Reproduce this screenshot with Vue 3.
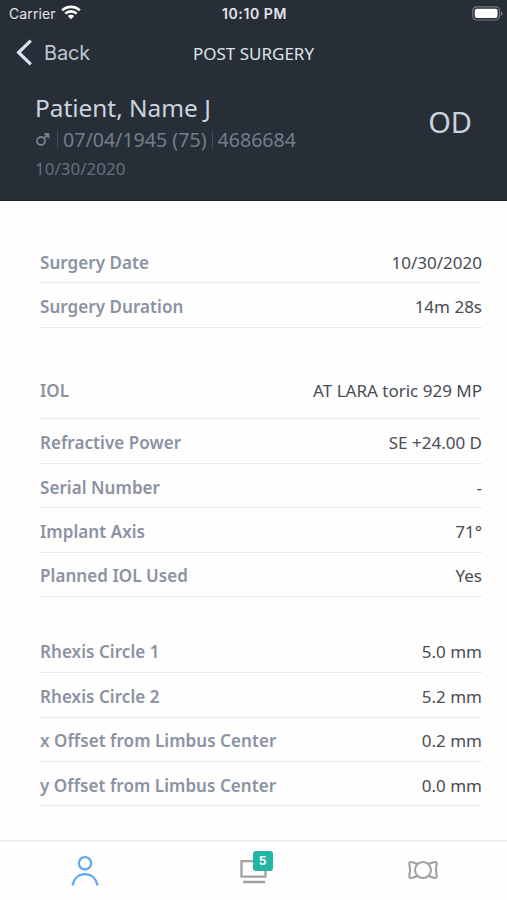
<template>
  <div class="screen">
    <header class="header">
      <div class="status-bar">
        <div class="carrier">
          <span>Carrier</span>
          <svg class="wifi" width="20" height="15" viewBox="0 0 20 15">
            <path d="M1.2 5.4a12.6 12.6 0 0 1 17.6 0" />
            <path d="M4.3 8.6a8.2 8.2 0 0 1 11.4 0" />
            <path class="wifi-dot" d="M6.8 11a4.6 4.6 0 0 1 6.4 0L10 14.3z" />
          </svg>
        </div>
        <span class="time">10:10 PM</span>
        <svg class="battery" width="31" height="15" viewBox="0 0 31 15">
          <rect class="battery-shell" x="0.8" y="0.8" width="26.8" height="13.2" rx="4" />
          <rect class="battery-level" x="2.8" y="2.8" width="22.8" height="9.2" rx="2" />
          <path class="battery-cap" d="M29 5.2c2 .8 2 3.8 0 4.6z" />
        </svg>
      </div>

      <nav class="nav-bar">
        <button type="button" class="back">
          <svg width="17" height="27" viewBox="0 0 17 27">
            <path d="M14.8 1.6L2.6 13.5l12.2 11.9" />
          </svg>
          <span>Back</span>
        </button>
        <h1 class="title">POST SURGERY</h1>
      </nav>

      <div class="patient">
        <div class="patient-info">
          <div class="name">Patient, Name J</div>
          <div class="details">
            <svg class="gender" width="15" height="15" viewBox="0 0 15 15">
              <circle cx="6" cy="9" r="4" />
              <path d="M9 6.2l4.3-4M9.3 2h4.2v4.3" />
            </svg>
            <i class="bar"></i>
            <span class="birth">07/04/1945 (75)</span>
            <i class="bar"></i>
            <span class="number">4686684</span>
          </div>
          <div class="visit">10/30/2020</div>
        </div>
        <div class="eye">OD</div>
      </div>
    </header>

    <main class="content">
      <section v-for="(group, index) in groups" :key="index" class="group">
        <div
          v-for="row in group"
          :key="row.label"
          class="row"
          :class="{ tall: row.tall }"
        >
          <span class="label">{{ row.label }}</span>
          <span class="value">{{ row.value }}</span>
        </div>
      </section>
    </main>

    <footer class="tab-bar">
      <button
        v-for="tab in tabs"
        :key="tab"
        type="button"
        class="tab"
        :class="{ active: tab === activeTab }"
        :aria-label="tab"
        @click="activeTab = tab"
      >
        <svg v-if="tab === 'patient'" width="30" height="32" viewBox="0 0 30 32">
          <circle cx="15" cy="8.3" r="6.2" />
          <path d="M2.5 30.5C4 23 9 19.2 15 19.2S26 23 27.5 30.5" />
        </svg>
        <span v-else-if="tab === 'devices'" class="devices">
          <svg width="30" height="28" viewBox="0 0 30 28">
            <path d="M2.5 4.2h24v15.5h-24zM4.2 25h22" />
          </svg>
          <span class="badge">5</span>
        </span>
        <svg v-else class="lens" width="32" height="22" viewBox="0 0 32 22">
          <circle cx="16" cy="11" r="8" />
          <path d="M10.5 4.6C8.5 4.9 6.5 3.4 4.4 3C2.8 2.7 2 3.6 2.3 5.1C3.4 9 3.4 13 2.3 16.9C2 18.4 2.8 19.3 4.4 19C6.5 18.6 8.5 17.1 10.5 17.4" />
          <path d="M21.5 4.6C23.5 4.9 25.5 3.4 27.6 3C29.2 2.7 30 3.6 29.7 5.1C28.6 9 28.6 13 29.7 16.9C30 18.4 29.2 19.3 27.6 19C25.5 18.6 23.5 17.1 21.5 17.4" />
        </svg>
      </button>
    </footer>
  </div>
</template>

<script setup>
import { ref } from 'vue'

const groups = [
  [
    { label: 'Surgery Date', value: '10/30/2020' },
    { label: 'Surgery Duration', value: '14m 28s' }
  ],
  [
    { label: 'IOL', value: 'AT LARA toric 929 MP', tall: true },
    { label: 'Refractive Power', value: 'SE +24.00 D' },
    { label: 'Serial Number', value: '-' },
    { label: 'Implant Axis', value: '71°' },
    { label: 'Planned IOL Used', value: 'Yes' }
  ],
  [
    { label: 'Rhexis Circle 1', value: '5.0 mm' },
    { label: 'Rhexis Circle 2', value: '5.2 mm' },
    { label: 'x Offset from Limbus Center', value: '0.2 mm' },
    { label: 'y Offset from Limbus Center', value: '0.0 mm' }
  ]
]

const tabs = ['patient', 'devices', 'lens']
const activeTab = ref('patient')
</script>

<style>
body {
  margin: 0;
}
</style>

<style scoped>
.screen {
  display: flex;
  flex-direction: column;
  width: 507px;
  height: 900px;
  overflow: hidden;
  background: #fefefe;
  font-family: "Noto Sans", sans-serif;
}
svg {
  display: block;
  fill: none;
}
button {
  border: 0;
  padding: 0;
  background: none;
  font: inherit;
  cursor: pointer;
}
.header {
  flex: none;
  box-sizing: border-box;
  height: 201px;
  background: #272e37;
  border-bottom: 1px solid #1c2129;
}
.status-bar {
  display: grid;
  grid-template-columns: 1fr auto 1fr;
  align-items: center;
  height: 27px;
  padding: 0 6px 0 9px;
  font-family: Inter, sans-serif;
  font-size: 14px;
  color: #e3e6ea;
}
.carrier {
  display: flex;
  align-items: center;
  gap: 5px;
  letter-spacing: 0.1px;
}
.wifi {
  margin-top: -2px;
  stroke: #fff;
  stroke-width: 2.7;
}
.wifi .wifi-dot {
  fill: #fff;
  stroke: none;
}
.time {
  font-weight: 600;
  letter-spacing: 0.6px;
  margin-right: 1px;
}
.battery {
  justify-self: end;
  margin-right: -2px;
  margin-top: -1px;
}
.battery-shell {
  stroke: #747980;
  stroke-width: 1.2;
}
.battery-level {
  fill: #fff;
}
.battery-cap {
  fill: #747980;
}
.nav-bar {
  display: grid;
  grid-template-columns: 1fr auto 1fr;
  align-items: center;
  height: 51px;
  padding: 0 16px;
}
.back {
  display: flex;
  align-items: center;
  gap: 11px;
  font-family: Inter, sans-serif;
  font-size: 20px;
  letter-spacing: -0.2px;
  color: #bfc6d1;
}
.back svg {
  stroke: #dbe3ee;
  stroke-width: 3.2;
}
.title {
  margin: 2px 0 0;
  font-size: 17px;
  font-weight: 400;
  color: #dfe3e9;
}
.patient {
  display: flex;
  justify-content: space-between;
  padding: 13px 35px 0;
}
.name {
  font-size: 24.4px;
  line-height: 34px;
  color: #ccd3de;
}
.details {
  display: flex;
  align-items: center;
  height: 28px;
  font-size: 19.6px;
  color: #737d8a;
}
.gender {
  stroke: #737d8a;
  stroke-width: 1.9;
}
.bar {
  width: 1px;
  height: 17px;
  background: #454d57;
}
.gender + .bar {
  margin-left: 7px;
}
.birth {
  margin: 0 5px;
}
.number {
  margin-left: 5px;
}
.visit {
  font-size: 17px;
  line-height: 32px;
  color: #66707c;
}
.eye {
  margin-top: 11px;
  font-size: 29px;
  line-height: 40px;
  color: #ccd3de;
}
.content {
  flex: 1;
  display: flex;
  flex-direction: column;
  gap: 31.7px;
  padding: 38px 25px 0 40px;
}
.row {
  display: flex;
  justify-content: space-between;
  align-items: center;
  box-sizing: border-box;
  height: 44.4px;
  padding-top: 3px;
  border-bottom: 1px solid #e9ebed;
  font-size: 17px;
}
.row.tall {
  height: 60px;
  padding-top: 3px;
}
.label {
  font-weight: 600;
  letter-spacing: 0.06px;
  color: #8b92a2;
}
.value {
  color: #494c52;
}
.tab-bar {
  flex: none;
  box-sizing: border-box;
  display: flex;
  height: 60px;
  border-top: 2px solid #eeeff0;
}
.tab {
  flex: 1;
  display: flex;
  justify-content: center;
  align-items: center;
}
.tab svg {
  stroke: #a1a1a1;
  stroke-width: 2.3;
}
.tab .lens {
  margin-top: -2px;
  stroke-width: 2.1;
}
.tab.active svg {
  stroke: #62a9f0;
}
.devices {
  position: relative;
}
.badge {
  position: absolute;
  top: -6px;
  left: 14px;
  width: 20px;
  height: 20px;
  border-radius: 3px;
  background: #24b6a4;
  color: #fff;
  font-family: Inter, sans-serif;
  font-size: 12px;
  font-weight: 700;
  line-height: 20px;
  text-align: center;
}
</style>
